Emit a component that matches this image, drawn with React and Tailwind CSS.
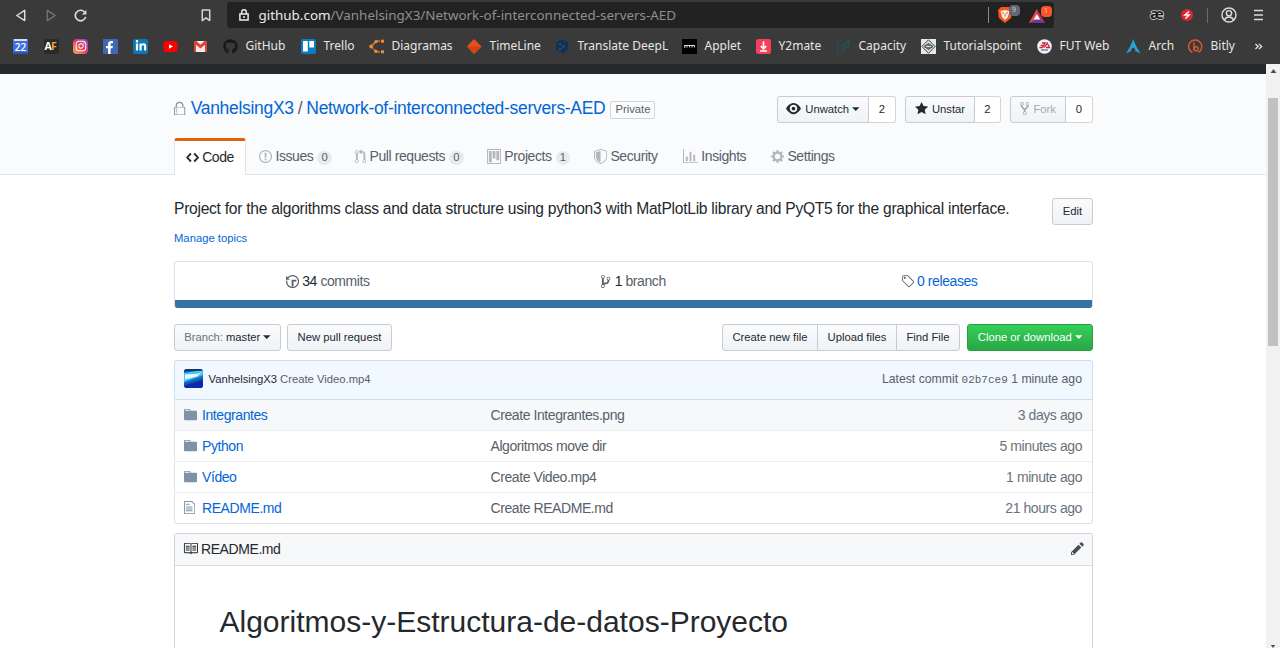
import React from "react";
import { FaFacebookF, FaLinkedinIn, FaInstagram, FaGithub } from "react-icons/fa";

const P = {
  lock: [14, "M2 7h10v7.500H2V7zm-1-.500v8.500h12V6.500h-1.800V4.800C11.200 2.300 9.500.8 7 .8S2.800 2.300 2.800 4.800v1.700H1zm3.200-1.700C4.200 3.200 5.300 2.200 7 2.200s2.800 1 2.800 2.600v1.700H4.200V4.800zM3 8v1h1.500V8H3zm0 2.200v1h1.500v-1H3zm0 2.200v1h1.500v-1H3z"],
  eye: [16, "M8.06 2C3 2 0 8 0 8s3 6 8.06 6C13 14 16 8 16 8s-3-6-7.94-6zM8 12c-2.200 0-4-1.780-4-4 0-2.200 1.800-4 4-4 2.220 0 4 1.800 4 4 0 2.220-1.780 4-4 4zm2-4c0 1.110-.89 2-2 2-1.110 0-2-.89-2-2 0-1.110.89-2 2-2 1.110 0 2 .89 2 2z"],
  star: [14, "M14 6l-4.900-.64L7 1 4.900 5.360 0 6l3.600 3.260L2.670 14 7 11.670 11.330 14l-.93-4.740z"],
  fork: [10, "M8 1a1.993 1.993 0 00-1 3.720V6L5 8 3 6V4.720A1.993 1.993 0 002 1a1.993 1.993 0 00-1 3.720V6.500l3 3v1.780A1.993 1.993 0 005 15a1.993 1.993 0 001-3.720V9.500l3-3V4.720A1.993 1.993 0 008 1zM2 4.200C1.340 4.200.8 3.650.8 3c0-.65.55-1.200 1.200-1.200.65 0 1.200.55 1.200 1.200 0 .65-.55 1.200-1.200 1.200zm3 10c-.66 0-1.200-.55-1.200-1.200 0-.65.55-1.200 1.200-1.200.65 0 1.200.55 1.200 1.200 0 .65-.55 1.200-1.200 1.200zm3-10c-.66 0-1.200-.55-1.200-1.200 0-.65.55-1.200 1.200-1.200.65 0 1.200.55 1.200 1.200 0 .65-.55 1.200-1.200 1.200z"],
  code: [14, "M9.5 3L8 4.5 11.5 8 8 11.5 9.5 13 14 8 9.5 3zm-5 0L0 8l4.5 5L6 11.5 2.5 8 6 4.5 4.5 3z"],
  issue: [14, "M7 2.3c3.14 0 5.7 2.56 5.7 5.7s-2.56 5.7-5.7 5.7A5.71 5.71 0 011.3 8c0-3.14 2.56-5.7 5.7-5.7zM7 1C3.14 1 0 4.14 0 8s3.14 7 7 7 7-3.14 7-7-3.14-7-7-7zm1 3H6v5h2V4zm0 6H6v2h2v-2z"],
  pr: [12, "M11 11.28V5c-.03-.78-.34-1.47-.94-2.06C9.46 2.35 8.78 2.03 8 2H7V0L4 3l3 3V4h1c.27.02.48.11.69.31.21.2.3.42.31.69v6.28A1.993 1.993 0 0010 15a1.993 1.993 0 001-3.72zm-1 2.92c-.66 0-1.2-.55-1.2-1.2 0-.65.55-1.2 1.2-1.2.65 0 1.2.55 1.2 1.2 0 .65-.55 1.2-1.2 1.2zM4 3c0-1.11-.89-2-2-2a1.993 1.993 0 00-1 3.72v6.56A1.993 1.993 0 002 15a1.993 1.993 0 001-3.72V4.72c.59-.34 1-.98 1-1.72zm-.8 10c0 .66-.55 1.2-1.2 1.2-.65 0-1.2-.55-1.2-1.2 0-.65.55-1.2 1.2-1.2.65 0 1.2.55 1.2 1.2zM2 4.2C1.34 4.2.8 3.65.8 3c0-.65.55-1.2 1.2-1.2.65 0 1.2.55 1.2 1.2 0 .65-.55 1.2-1.2 1.2z"],
  project: [15, "M10 12h3V2h-3v10zm-4-2h3V2H6v8zm-4 4h3V2H2v12zm-1 1h13V1H1v14zM14 0H1a1 1 0 00-1 1v14a1 1 0 001 1h13a1 1 0 001-1V1a1 1 0 00-1-1z"],
  shield: [14, "M0 2l7-2 7 2v6.02C14 12.69 8.69 16 7 16c-1.69 0-7-3.31-7-7.98V2zm1 .75L7 1l6 1.75v5.268C13 12.104 8.449 15 7 15c-1.449 0-6-2.896-6-6.982V2.75zm1 .75L7 2v12c-1.207 0-5-2.482-5-5.985V3.5z"],
  graph: [16, "M16 14v1H0V0h1v14h15zM5 13H3V8h2v5zm4 0H7V3h2v10zm4 0h-2V6h2v7z"],
  gear: [14, "M14 8.77v-1.6l-1.94-.64-.45-1.09.88-1.84-1.13-1.13-1.81.91-1.09-.45-.69-1.92h-1.6l-.63 1.94-1.11.45-1.84-.88-1.13 1.13.91 1.81-.45 1.09L0 7.23v1.59l1.94.64.45 1.09-.88 1.84 1.13 1.13 1.81-.91 1.09.45.69 1.92h1.59l.63-1.94 1.11-.45 1.84.88 1.13-1.13-.92-1.81.47-1.09L14 8.75v.02zM7 11c-1.66 0-3-1.34-3-3s1.34-3 3-3 3 1.34 3 3-1.34 3-3 3z"],
  history: [14, "M8 13H6V6h5v2H8v5zM7 1C4.81 1 2.87 2.02 1.59 3.59L0 2v4h4L2.5 4.5C3.55 3.17 5.17 2.3 7 2.3c3.14 0 5.7 2.56 5.7 5.7s-2.56 5.7-5.7 5.7A5.71 5.71 0 011.3 8c0-.34.03-.67.09-1H.08C.03 7.33 0 7.66 0 8c0 3.86 3.14 7 7 7s7-3.14 7-7-3.14-7-7-7z"],
  branch: [10, "M10 5c0-1.11-.89-2-2-2a1.993 1.993 0 00-1 3.72v.3c-.02.52-.23.98-.63 1.38-.4.4-.86.61-1.38.63-.83.02-1.48.16-2 .45V4.72a1.993 1.993 0 00-1-3.72C.88 1 0 1.89 0 3a2 2 0 001 1.72v6.56c-.59.35-1 .99-1 1.72 0 1.11.89 2 2 2 1.11 0 2-.89 2-2 0-.53-.2-1-.53-1.36.09-.06.48-.41.59-.47.25-.11.56-.17.94-.17 1.05-.05 1.95-.45 2.75-1.25S8.95 7.77 9 6.73h-.02C9.59 6.37 10 5.73 10 5zM2 1.8c.66 0 1.2.55 1.2 1.2 0 .65-.55 1.2-1.2 1.2C1.35 4.2.8 3.65.8 3c0-.65.55-1.2 1.2-1.2zm0 12.41c-.66 0-1.2-.55-1.2-1.2 0-.65.55-1.2 1.2-1.2.65 0 1.2.55 1.2 1.2 0 .65-.55 1.2-1.2 1.2zm6-8c-.66 0-1.2-.55-1.2-1.2 0-.65.55-1.2 1.2-1.2.65 0 1.2.55 1.2 1.2 0 .65-.55 1.2-1.2 1.2z"],
  tag: [14, "M7.73 1.73C7.26 1.26 6.62 1 5.96 1H3.5C2.13 1 1 2.13 1 3.5v2.47c0 .66.27 1.3.73 1.77l6.06 6.06c.39.39 1.02.39 1.41 0l4.59-4.59a.996.996 0 000-1.41L7.73 1.73zM2.38 7.09c-.31-.3-.47-.7-.47-1.13V3.5c0-.88.72-1.59 1.59-1.59h2.47c.42 0 .83.16 1.13.47l6.14 6.13-4.73 4.73-6.13-6.15zM3.01 3h2v2H3V3h.01z"],
  folder: [14, "M13 4H7V3c0-.66-.31-1-1-1H1c-.55 0-1 .45-1 1v10c0 .55.45 1 1 1h12c.55 0 1-.45 1-1V5c0-.55-.45-1-1-1zM6 4H1V3h5v1z"],
  file: [12, "M6 5H2V4h4v1zM2 8h7V7H2v1zm0 2h7V9H2v1zm0 2h7v-1H2v1zm10-7.5V14c0 .55-.45 1-1 1H1c-.55 0-1-.45-1-1V2c0-.55.45-1 1-1h7.5L12 4.5zM11 5L8 2H1v12h10V5z"],
  book: [16, "M3 5h4v1H3V5zm0 3h4V7H3v1zm0 2h4V9H3v1zm11-5h-4v1h4V5zm0 2h-4v1h4V7zm0 2h-4v1h4V9zm2-6v9c0 .55-.45 1-1 1H9.5l-1 1-1-1H2c-.55 0-1-.45-1-1V3c0-.55.45-1 1-1h5.5l1 1 1-1H15c.55 0 1 .45 1 1zm-8 .5L7.5 3H2v9h6V3.5zm7-.5H9.5l-.5.5V12h6V3z"],
  pencil: [14, "M0 12v3h3l8-8-3-3-8 8zm3 2H1v-2h1v1h1v1zm10.3-9.3L12 6 9 3l1.3-1.3a.996.996 0 011.41 0l1.59 1.59c.39.39.39 1.02 0 1.41z"],
};

function Oct({ n, className = "" }) {
  const [w, d] = P[n];
  return (
    <svg viewBox={`0 0 ${w} 16`} width={w * 0.9375} height={15} fill="currentColor" className={`shrink-0 ${className}`}>
      <path fillRule="evenodd" d={d} />
    </svg>
  );
}

const Caret = ({ className = "" }) => (
  <svg viewBox="0 0 8 4" className={`ml-[3px] h-1 w-[7.5px] shrink-0 ${className}`} fill="currentColor">
    <path d="M0 0h8L4 4z" />
  </svg>
);

const bookmarks = [
  { w: "w-[31px]", icon: <svg viewBox="0 0 15 15"><rect width="15" height="15" fill="#3f6fdc" /><rect x="1" width="13" height="2" fill="#d8dee8" /><rect y="13" width="15" height="2" fill="#2f56b5" /><text x="7.5" y="12" textAnchor="middle" fontSize="10" fontWeight="600" fill="#fff" fontFamily="Open Sans, sans-serif">22</text></svg> },
  { w: "w-[29px]", icon: <svg viewBox="0 0 15 15"><rect width="15" height="15" rx="2" fill="#2a2a2a" /><text x="0.5" y="11" fontSize="10.5" fontWeight="700" fill="#fff" fontFamily="Open Sans, sans-serif">A</text><text x="7" y="11" fontSize="10.5" fontWeight="700" fill="#f2a53a" fontFamily="Open Sans, sans-serif">F</text></svg> },
  { w: "w-[30px]", icon: <span className="flex h-[15px] w-[15px] items-center justify-center rounded-[4px] bg-linear-to-tr from-[#fdb04a] via-[#e33b63] to-[#8a3ac8] text-white"><FaInstagram size={12} /></span> },
  { w: "w-[30px]", icon: <span className="flex h-[15px] w-[15px] items-end justify-end bg-[#4267b2] pr-[2px] text-white"><FaFacebookF size={13} /></span> },
  { w: "w-[30px]", icon: <span className="flex h-[15px] w-[15px] items-center justify-center rounded-[2px] bg-[#0b77b3] text-white"><FaLinkedinIn size={12} /></span> },
  { w: "w-[30px]", icon: <svg viewBox="0 0 15 15"><rect x=".5" y="2" width="14" height="11" rx="3" fill="#f00" /><path d="M6 5.200l4 2.300-4 2.300z" fill="#fff" /></svg> },
  { w: "w-[30px]", icon: <svg viewBox="0 0 15 15"><rect x="1" y="2" width="13" height="11" rx="1" fill="#f0e9e7" /><path d="M1 2h2.4l4.1 3.8L11.600 2H14v11h-2V5.800L7.500 9.500 3 5.800V13H1z" fill="#dc4437" /></svg> },
  { w: "w-[78px]", t: "GitHub", icon: <FaGithub size={15} className="text-[#181818]" /> },
  { w: "w-[68px]", t: "Trello", icon: <svg viewBox="0 0 15 15"><rect width="15" height="15" rx="2" fill="#0d7cc4" /><rect x="2" y="2" width="4.800" height="10.500" rx=".6" fill="#fff" /><rect x="8.300" y="2" width="4.700" height="6.500" rx=".6" fill="#fff" /></svg> },
  { w: "w-[98px]", t: "Diagramas", icon: <svg viewBox="0 0 15 15" fill="none" stroke="#f08a33" strokeWidth="1.300"><path d="M11 2.200H7.500L2 7.500 7.500 12.800H11" strokeDasharray="4 1" /><g fill="#f08a33" stroke="none"><circle cx="2.200" cy="7.500" r="1.900" /><circle cx="7" cy="2.600" r="1.700" /><circle cx="7" cy="12.400" r="1.700" /><rect x="12" y="0.700" width="3" height="3" /><rect x="12" y="11.300" width="3" height="3" /></g></svg> },
  { w: "w-[88px]", t: "TimeLine", icon: <svg viewBox="0 0 15 15"><path d="M7 0l7.500 7.500L7 15 0 7.500z" fill="#e8501f" /><path d="M0 7.500h14.500L7 15z" fill="#d04415" /></svg> },
  { w: "w-[127px]", t: "Translate DeepL", icon: <svg viewBox="0 0 15 15"><path d="M7 0l6 3.500v7L9.500 12.600V15l-3-1.500-5.500-3v-7z" fill="#0f3352" /><g fill="none" stroke="#2a4b67" strokeWidth=".8"><path d="M5 5l4 2.500L5 10" /></g><circle cx="5" cy="5" r=".9" fill="#38597a" /><circle cx="9" cy="7.500" r=".9" fill="#38597a" /><circle cx="5" cy="10" r=".9" fill="#38597a" /></svg> },
  { w: "w-[74px]", t: "Applet", icon: <svg viewBox="0 0 15 15"><rect width="15" height="15" fill="#000" /><path d="M2 6.500h11M2.800 6v3M5 6v2.500M7.500 6v2.500M10 6v2.500M12.300 6v2.500" stroke="#d8d8d8" strokeWidth="1" /></svg> },
  { w: "w-[80px]", t: "Y2mate", icon: <svg viewBox="0 0 15 15"><rect width="15" height="15" rx="2.500" fill="#f5405d" /><path d="M7.500 2.500v7M4.800 7l2.700 3 2.700-3M4 12h7" stroke="#fff" strokeWidth="1.600" fill="none" /></svg> },
  { w: "w-[85px]", t: "Capacity", icon: <svg viewBox="0 0 15 15" fill="none" stroke="#1d5560" strokeWidth="1.300"><path d="M5 1.500H1.500v12H5" strokeDasharray="2 1" /><path d="M7 13.500V6l6-4.500v5L7.500 9.500" /></svg> },
  { w: "w-[116px]", t: "Tutorialspoint", icon: <svg viewBox="0 0 15 15"><rect width="15" height="15" fill="#e6e8e6" /><path d="M7.500.8l6.700 6.700-6.700 6.700L.8 7.500z" fill="#d5dcd8" stroke="#3e4b46" strokeWidth="1" /><path d="M3 7.500l4.500-3 4.500 3-4.500 3z" fill="#61756b" stroke="#34423b" strokeWidth=".8" /><path d="M5 7.500h5" stroke="#dde" strokeWidth="1" /></svg> },
  { w: "w-[89px]", t: "FUT Web", icon: <svg viewBox="0 0 15 15"><circle cx="7.500" cy="7.500" r="7.300" fill="#f1f1f3" /><path d="M2.500 8.500h3l2.600-4.500H5M3.700 6.300h2.600M7.300 8.500l2.900-4.500 2.300 4.500H9" stroke="#cf2338" strokeWidth="1.300" fill="none" /><path d="M4 11h7" stroke="#526a9a" strokeWidth="1.200" /></svg> },
  { w: "w-[62px]", t: "Arch", icon: <svg viewBox="0 0 15 15"><path d="M7.200 0C5.500 4.500 3.500 9 0 14.500c2.500-1.300 3.700-1.900 5-2.300.2-2.200 1-3.500 2.200-3.500s2.100 1.300 2.200 3.500c1.400.4 2.700 1 5.100 2.300C11 9 9 4.500 7.200 0z" fill="#2ba0d8" /></svg> },
  { w: "w-[65.5px]", t: "Bitly", icon: <svg viewBox="0 0 15 15" fill="none" stroke="#e2592c" strokeWidth="1.400"><path d="M4.500 13.600A6.600 6.600 0 1 1 10.500 13.300M6 3.500v7.500" /><circle cx="8" cy="9.800" r="2.100" /></svg> },
];

function Browser() {
  return (
    <header className="h-16 shrink-0 bg-[#3a3a3a] font-['Noto_Sans',sans-serif] text-[#e6e6e6]">
      <div className="flex h-[30px] items-center">
        <svg viewBox="0 0 12 14" className="ml-[15px] h-[13px] w-3" fill="none" stroke="#dcdcdc" strokeWidth="1.600" strokeLinejoin="round"><path d="M10 1.500v11L1.500 7z" /></svg>
        <svg viewBox="0 0 12 14" className="ml-[18px] h-[13px] w-3" fill="none" stroke="#757575" strokeWidth="1.400" strokeLinejoin="round"><path d="M2 1.500v11L10.500 7z" /></svg>
        <svg viewBox="0 0 14 14" className="ml-[17px] h-[13px] w-[13px]" fill="none" stroke="#dcdcdc" strokeWidth="1.800"><path d="M11.300 3.200A5.700 5.700 0 1 0 12.600 8.500" /><path d="M13.300 1v5H8.500z" fill="#dcdcdc" stroke="none" /></svg>
        <svg viewBox="0 0 10 14" className="ml-[114px] h-[13px] w-[10px]" fill="none" stroke="#d6d6d6" strokeWidth="1.600" strokeLinejoin="round"><path d="M1 1h8v11.500L5 9.500l-4 3z" /></svg>
        <div className="ml-[16px] flex h-[26px] w-[827px] items-center rounded-[3px] bg-[#222222]">
          <svg viewBox="0 0 10 12" className="ml-[12px] h-3 w-[10px]" fill="none" stroke="#e4e4e4" strokeWidth="1.600"><rect x=".9" y="5" width="8.200" height="6" /><path d="M2.700 5V3a2.300 2.300 0 0 1 4.600 0v2M5 7v2" /></svg>
          <div className="ml-[9.500px] w-[729px] text-[13.420px] leading-5 whitespace-nowrap text-[#8f8f8f]"><span className="text-[#ececec]">github.com</span>/VanhelsingX3/Network-of-interconnected-servers-AED</div>
          <span className="h-4 w-px bg-[#8a8a8a]" />
          <span className="relative ml-[9px] flex">
            <svg viewBox="0 0 14 16" className="h-4 w-[14px]"><path d="M3 0h8l3 3-.8 8L7 16 .8 11 0 3z" fill="#f4571f" /><path d="M2.500 4L7 3l4.500 1-1.500 6-3 3-3-3z" fill="#fbe9e2" /><path d="M4 5.500l2 1M10 5.500l-2 1M7 7v2.500" stroke="#f4571f" strokeWidth="1" /></svg>
            <span className="absolute -top-[2px] left-[11px] flex h-[11px] w-[11px] items-center justify-center rounded-[4px] bg-[#616775] text-[7px] text-[#c9ccd3]">9</span>
          </span>
          <span className="relative ml-[17px] flex">
            <svg viewBox="0 0 16 14" className="mt-px h-[14px] w-4"><path d="M8 0l8 14H0z" fill="#b03368" /><path d="M8 0L0 14l8-4z" fill="#f0483e" /><path d="M0 14h16l-8-4z" fill="#5b3aa5" /><path d="M8 5l3.200 5.500H4.800z" fill="#fff" /></svg>
            <span className="absolute -top-[2px] left-[12px] flex h-[11px] w-[11px] items-center justify-center rounded-[4px] bg-[#fb542b] text-[7px] text-[#ffc6b6]">1</span>
          </span>
        </div>
        <svg viewBox="0 0 18 24" className="ml-[94px] h-6 w-[18px]"><text x="9" y="16.200" textAnchor="middle" fontSize="15" fontWeight="700" fontFamily="Noto Sans, sans-serif" fill="#1d1d1d" stroke="#d0d0d0" strokeWidth="1.600" paintOrder="stroke">æ</text></svg>
        <svg viewBox="0 0 12 12" className="ml-[15px] h-3 w-3"><circle cx="6" cy="6" r="6" fill="#e0252e" /><path d="M8 2.500L4 6h4L4.500 9.500" fill="none" stroke="#fff" strokeWidth="1.500" /></svg>
        <span className="ml-[14px] h-[15px] w-px bg-[#6b6b6b]" />
        <svg viewBox="0 0 16 16" className="ml-[13px] h-4 w-4" fill="none" stroke="#dcdcdc" strokeWidth="1.400"><circle cx="8" cy="8" r="7" /><circle cx="8" cy="6.200" r="2.600" /><path d="M3.500 13c.8-2.200 2.500-3 4.500-3s3.700.8 4.500 3" /></svg>
        <svg viewBox="0 0 10 12" className="ml-[17px] h-3 w-[10px]" stroke="#dcdcdc" strokeWidth="1.500"><path d="M0 1.500h9M0 6h9M0 10.500h9" /></svg>
      </div>
      <nav className="mt-[5px] flex h-[22px] items-center pl-[13px] text-[12px] whitespace-nowrap">
        {bookmarks.map((b, i) => (
          <a key={i} className={`flex shrink-0 items-center gap-[7.500px] ${b.w}`}>
            <span className="h-[15px] w-[15px] shrink-0">{b.icon}</span>
            {b.t}
          </a>
        ))}
        <svg viewBox="0 0 9 8" className="h-[7px] w-[9px]" fill="none" stroke="#e6e6e6" strokeWidth="1.600"><path d="M1 1l3 3-3 3M5 1l3 3-3 3" /></svg>
      </nav>
    </header>
  );
}

const btn = "flex h-[26.5px] items-center justify-center border border-[#c8cbcf] bg-linear-to-b from-[#fafbfc] to-[#eff3f6] text-[11.250px] text-[#24292e]";

function Social({ icon, label, count, w, cw, caret, disabled }) {
  return (
    <div className="flex">
      <button className={`${btn} ${w} rounded-l-[3px]`}>
        <Oct n={icon} className={`mr-[4px] -mt-px ${disabled ? "text-[#a6aaaf]" : ""}`} />
        <span className={disabled ? "text-[#a6aaaf]" : ""}>{label}</span>
        {caret && <Caret />}
      </button>
      <span className={`flex h-[26.5px] items-center justify-center rounded-r-[3px] border border-l-0 border-[#d3d5d8] bg-white text-[11.250px] ${cw}`}>{count}</span>
    </div>
  );
}

const tabs = [
  ["issue", "Issues", "0", "w-[96px]"],
  ["pr", "Pull requests", "0", "w-[132px]"],
  ["project", "Projects", "1", "w-[107px]"],
  ["shield", "Security", null, "w-[89px]"],
  ["graph", "Insights", null, "w-[88px]"],
  ["gear", "Settings", null, "w-[88px]"],
];

const files = [
  ["folder", "Integrantes", "Create Integrantes.png", "3 days ago"],
  ["folder", "Python", "Algoritmos move dir", "5 minutes ago"],
  ["folder", "Vídeo", "Create Video.mp4", "1 minute ago"],
  ["file", "README.md", "Create README.md", "21 hours ago"],
];

const body = "text-[14px] tracking-[-0.42px]";

function Page() {
  return (
    <main className="flex-1 overflow-hidden bg-white font-['Liberation_Sans',Arial,sans-serif] whitespace-nowrap text-[#24292e]">
      <div className="h-[10px] bg-[#24292e]" />
      <div className="h-[101px] border-b border-[#e1e4e8] bg-[#fafbfc]">
        <div className="mx-[174px] w-[919px]">
          <div className="flex h-[64px] pt-[22px]">
            <div className="flex h-[25px] items-center">
              <Oct n="lock" className="-ml-px mr-[4.500px] text-[#8b8f94]" />
              <div className="flex text-[17.500px] tracking-[-0.3px]">
                <a className="text-[#0366d6]">VanhelsingX3</a>
                <span className="mx-[4px] text-[#586069]">/</span>
                <a className="text-[#0366d6]">Network-of-interconnected-servers-AED</a>
              </div>
              <span className="mt-[3px] ml-[5px] flex h-[18.500px] w-[45px] items-center justify-center rounded-[2px] border border-[#d3d6d9] text-[11.250px] leading-none text-[#586069]">Private</span>
            </div>
            <div className="ml-auto flex gap-[9px]">
              <Social icon="eye" label="Unwatch" count="2" w="w-[92px]" cw="w-[27px]" caret />
              <Social icon="star" label="Unstar" count="2" w="w-[70px]" cw="w-[26px]" />
              <Social icon="fork" label="Fork" count="0" w="w-[56px]" cw="w-[27px]" disabled />
            </div>
          </div>
          <nav className={`flex h-[37px] text-[#586069] ${body}`}>
            <a className="flex h-[37px] w-[72px] shrink-0 items-center justify-center gap-[3px] rounded-t-[3px] border border-t-[3px] border-b-0 border-[#e1e4e8] border-t-[#e36209] bg-white pb-[2px] text-[#24292e]">
              <Oct n="code" />
              Code
            </a>
            <div className="flex pl-[12.500px]">
              {tabs.map(([icon, label, n, w]) => (
                <a key={label} className={`flex h-[37px] shrink-0 items-center ${w}`}>
                  <Oct n={icon} className="mr-[3.800px] text-[#b3b7bc]" />
                  {label}
                  {n && <span className="mt-[2px] ml-[4px] flex h-[14px] min-w-[14.500px] items-center justify-center rounded-full bg-[#e8eaec] text-[11.250px] leading-none tracking-normal">{n}</span>}
                </a>
              ))}
            </div>
          </nav>
        </div>
      </div>

      <div className="mx-[174px] w-[919px]">
        <div className="flex h-[52px] justify-between pt-[22px]">
          <p className="text-[15.600px] leading-[23px] tracking-[-0.265px]">Project for the algorithms class and data structure using python3 with MatPlotLib library and PyQT5 for the graphical interface.</p>
          <button className={`${btn} mt-px w-[41px] rounded-[3px]`}>Edit</button>
        </div>
        <a className="mt-[3px] block h-[16px] text-[11.250px] leading-[16px] text-[#0366d6]">Manage topics</a>

        <div className={`mt-[15px] flex h-[39px] rounded-t-[3px] border border-b-0 border-[#dfe2e5] text-[#586069] ${body}`}>
          <div className="flex flex-1 items-center justify-center gap-[3px]"><Oct n="history" /><span><b className="font-normal text-[#24292e]">34</b> commits</span></div>
          <div className="flex flex-1 items-center justify-center gap-[4px]"><Oct n="branch" /><span><b className="font-normal text-[#24292e]">1</b> branch</span></div>
          <div className="flex flex-1 items-center justify-center gap-[3px]"><Oct n="tag" /><a className="text-[#0366d6]">0 releases</a></div>
        </div>
        <div className="h-[8px] rounded-b-[3px] border-x border-[#dfe2e5] bg-[#3572a5]" />

        <div className="mt-[16px] flex">
          <button className={`${btn} w-[107px] rounded-[3px]`}><span className="mr-[3px] text-[#6a7178]">Branch:</span>master<Caret /></button>
          <button className={`${btn} ml-[6px] w-[105px] rounded-[3px]`}>New pull request</button>
          <div className="ml-auto flex">
            <button className={`${btn} w-[96px] rounded-l-[3px]`}>Create new file</button>
            <button className={`${btn} -ml-px w-[80px]`}>Upload files</button>
            <button className={`${btn} -ml-px w-[64px] rounded-r-[3px]`}>Find File</button>
          </div>
          <button className="ml-[7px] flex h-[26.5px] w-[126px] items-center justify-center rounded-[3px] border border-[#28a043] bg-linear-to-b from-[#34d058] to-[#28a745] text-[11.250px] text-white">Clone or download<Caret /></button>
        </div>

        <div className="mt-[9.500px] flex h-[40px] items-center rounded-t-[3px] border border-[#c8dff5] bg-[#f1f8ff] px-[10px] pb-[2px] text-[11.250px] text-[#586069]">
          <svg viewBox="0 0 19 19" className="mr-[5.500px] -ml-px h-[19px] w-[19px] -mt-px rounded-[3px]">
            <defs><linearGradient id="sky" x1="0" y1="0" x2=".3" y2="1"><stop offset="0" stopColor="#0a4f9e" /><stop offset=".5" stopColor="#1c94f4" /><stop offset="1" stopColor="#071a6e" /></linearGradient></defs>
            <rect width="19" height="19" fill="url(#sky)" />
            <path d="M0 4l19-3v5L11 9 0 13z" fill="#4cc3fb" /><path d="M1 5.500l13-.8 4-2-5 4.800L5 9.500l-4 1z" fill="#e9faff" /><path d="M0 0h19v1.500L0 2.500z" fill="#12365f" /><path d="M0 17l19-6v8H0z" fill="#0a28b0" />
          </svg>
          <span className="mr-[3px] text-[#24292e]">VanhelsingX3</span>
          <span>Create Video.mp4</span>
          <span className="ml-auto text-[12.250px]">Latest commit <span className="font-['Liberation_Mono',monospace] text-[11px]">02b7ce9</span> 1 minute ago</span>
        </div>
        <div className={`rounded-b-[3px] border border-t-0 border-[#dfe2e5] ${body}`}>
          {files.map(([icon, name, msg, age], i) => (
            <div key={name} className={`flex items-center px-[10px] text-[#586069] ${i === 0 ? "h-[30px] bg-[#f6f8fa]" : "h-[31px] border-t border-[#eaecef]"}`}>
              <span className="-ml-px flex w-[18px] pb-px"><Oct n={icon} className="text-[#7f93a8]" /></span>
              <a className="w-[288.500px] text-[#0366d6]">{name}</a>
              <span>{msg}</span>
              <span className="ml-auto text-[#6a737d]">{age}</span>
            </div>
          ))}
        </div>

        <div className="mt-[9px] h-[140px] rounded-t-[3px] border border-b-0 border-[#d1d5da]">
          <div className={`flex h-[32px] items-center border-b border-[#d9dce0] bg-[#f6f8fa] pr-[8px] pb-px pl-[8px] ${body}`}>
            <Oct n="book" className="mr-[3px] -mt-px" />
            <span>README.md</span>
            <Oct n="pencil" className="-mt-px ml-auto text-[#484e55]" />
          </div>
          <h1 className="pt-[38px] pl-[44.500px] text-[30px] leading-[36px]">Algoritmos-y-Estructura-de-datos-Proyecto</h1>
        </div>
      </div>
    </main>
  );
}

export default function App() {
  return (
    <div className="flex h-[648px] w-[1280px] flex-col overflow-hidden">
      <Browser />
      <div className="flex min-h-0 flex-1">
        <Page />
        <aside className="flex w-[14px] shrink-0 flex-col items-center bg-[#f1f1f1]">
          <svg viewBox="0 0 6 4" className="mt-[5px] h-1 w-[7px] shrink-0"><path d="M3 0l3 4H0z" fill="#505050" /></svg>
          <div className="mt-[25px] h-[248px] w-[10px] shrink-0 bg-[#c1c1c1]" />
          <svg viewBox="0 0 6 4" className="mt-auto h-[3px] w-[6px] shrink-0"><path d="M0 0h6L3 4z" fill="#505050" /></svg>
        </aside>
      </div>
    </div>
  );
}
